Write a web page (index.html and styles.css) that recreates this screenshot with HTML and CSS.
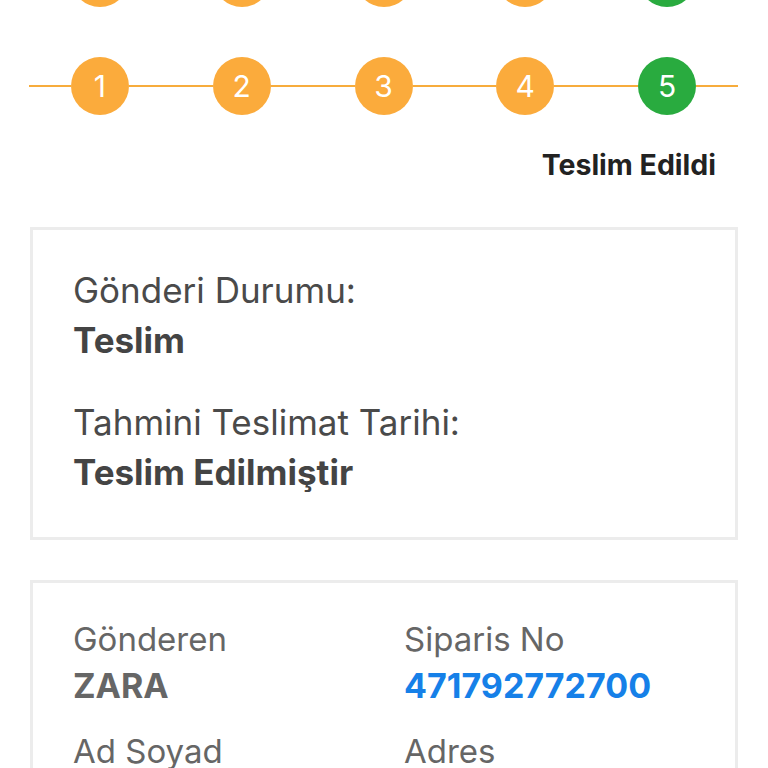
FILE: index.html
```html
<!DOCTYPE html>
<html lang="tr">
<head>
<meta charset="utf-8">
<title>Gönderi Takip</title>
<link rel="stylesheet" href="styles.css">
</head>
<body>
<div class="page">
  <div class="stepper stepper-prev">
    <span class="seg seg-end"></span>
    <span class="step done">1</span>
    <span class="seg"></span>
    <span class="step done">2</span>
    <span class="seg"></span>
    <span class="step done">3</span>
    <span class="seg"></span>
    <span class="step done">4</span>
    <span class="seg"></span>
    <span class="step current">5</span>
    <span class="seg seg-end"></span>
  </div>
  <div class="stepper">
    <span class="seg seg-end"></span>
    <span class="step done">1</span>
    <span class="seg"></span>
    <span class="step done">2</span>
    <span class="seg"></span>
    <span class="step done">3</span>
    <span class="seg"></span>
    <span class="step done">4</span>
    <span class="seg"></span>
    <span class="step current">5</span>
    <span class="seg seg-end"></span>
  </div>
  <div class="step-label">Teslim Edildi</div>

  <div class="card status-card">
    <div class="label">Gönderi Durumu:</div>
    <div class="value">Teslim</div>
    <div class="label label-2">Tahmini Teslimat Tarihi:</div>
    <div class="value">Teslim Edilmiştir</div>
  </div>

  <div class="card info-card">
    <div class="info-item">
      <div class="info-label">Gönderen</div>
      <div class="info-value">ZARA</div>
    </div>
    <div class="info-item">
      <div class="info-label">Siparis No</div>
      <div class="info-value link">471792772700</div>
    </div>
    <div class="info-item">
      <div class="info-label">Ad Soyad</div>
      <div class="info-value">&nbsp;</div>
    </div>
    <div class="info-item">
      <div class="info-label">Adres</div>
      <div class="info-value">&nbsp;</div>
    </div>
  </div>
</div>
</body>
</html>
```

FILE: styles.css
```css
html, body {
  margin: 0;
  padding: 0;
  background: #ffffff;
}

body {
  font-family: Inter, "Liberation Sans", Arial, sans-serif;
  overflow: hidden;
  height: 768px;
}

.page {
  padding: 0 30px 0 29px;
  margin-top: -51px;
}

.stepper {
  display: flex;
  align-items: center;
  height: 58px;
}

.stepper-prev {
  margin-bottom: 50px;
}

.seg {
  flex: 1;
  height: 2px;
  background: #f7ac3c;
}

.seg-end {
  flex: 0.5;
}

.step {
  width: 58px;
  height: 58px;
  border-radius: 50%;
  display: flex;
  align-items: center;
  justify-content: center;
  color: #ffffff;
  font-size: 30px;
  font-weight: 400;
  flex-shrink: 0;
}

.step.done {
  background: #fbab3c;
}

.step.current {
  background: #29ab3f;
}

.step-label {
  text-align: right;
  padding-right: 22px;
  margin-top: 33px;
  font-size: 28.5px;
  line-height: 34px;
  font-weight: 700;
  color: #222222;
}

.card {
  border: 3px solid #ececec;
  margin-left: 1px;
}

.status-card {
  margin-top: 45px;
  padding: 35px 40px 0;
  height: 313px;
  box-sizing: border-box;
}

.label {
  font-size: 35px;
  line-height: 50px;
  color: #4a4a4a;
}

.label-2 {
  margin-top: 32px;
}

.value {
  font-size: 35px;
  line-height: 50px;
  font-weight: 700;
  color: #444444;
}

.info-card {
  margin-top: 40px;
  padding: 33px 40px 20px;
  display: grid;
  grid-template-columns: 331px 1fr;
  row-gap: 18px;
}

.info-label {
  font-size: 33px;
  line-height: 46px;
  color: #666666;
}

.info-value {
  font-size: 34px;
  line-height: 48px;
  font-weight: 700;
  color: #666666;
}

.info-value.link {
  color: #1680e8;
}
```
